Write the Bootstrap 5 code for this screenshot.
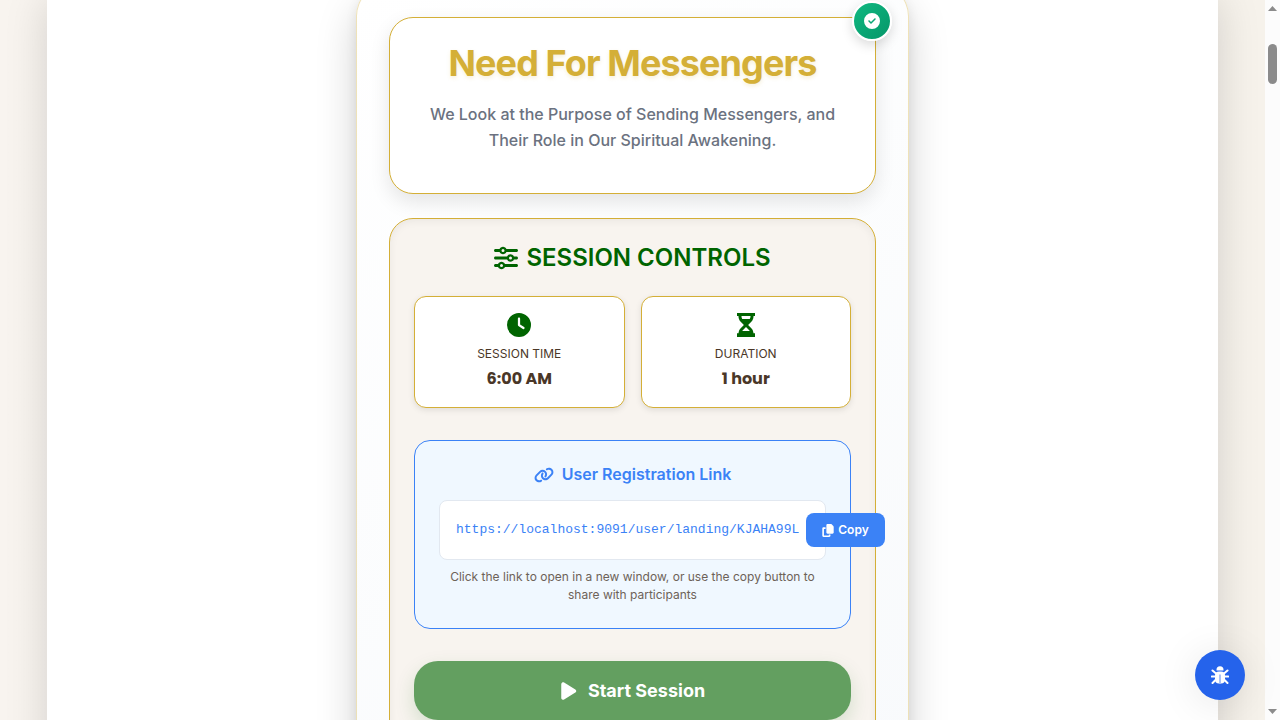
<!DOCTYPE html>
<html lang="en">
<head>
<meta charset="utf-8">
<meta name="viewport" content="width=device-width, initial-scale=1">
<title>Need For Messengers</title>
<link rel="stylesheet" href="https://cdn.jsdelivr.net/npm/bootstrap@5.3.0/dist/css/bootstrap.min.css">
<style>
  :root { --gold: #d4af37; --green: #006400; --blue: #3b82f6; --brown: #4a3728; }
  body { font-family: Inter, "Liberation Sans", sans-serif; background: #f8f4ef; color: var(--brown); }
  svg { fill: currentColor; display: block; flex: none; }
  .viewport { overflow: hidden; }
  .backdrop { background: linear-gradient(90deg, #f8f4ef, #f6f2eb); }
  .sheet { margin: 0 47px; background: #fff; box-shadow: 0 0 40px rgba(0,0,0,.15); }
  .session { max-width: 553px; margin-top: -16px; padding: 32px; border: 1px solid rgba(212,175,55,.35); border-radius: 32px;
    background: linear-gradient(145deg, #fff, #f8fafc); box-shadow: 0 20px 40px rgba(0,0,0,.18), 0 4px 12px rgba(0,0,0,.08); }
  .intro { padding: 24px; border: 1px solid var(--gold); border-radius: 24px; background: #fff; box-shadow: 0 8px 20px rgba(0,0,0,.1); }
  .intro h1 { font-size: 36px; line-height: 43px; font-weight: 700; letter-spacing: -0.025em; color: var(--gold); text-shadow: 0 2px 4px rgba(212,175,55,.2); }
  .intro p { font-size: 16px; line-height: 26px; font-weight: 500; color: #6b7280; }
  .verified { top: -17px; right: -17px; width: 40px; height: 40px; border: 2px solid #fff; background: linear-gradient(135deg, #10b981, #059669); box-shadow: 0 4px 12px rgba(0,0,0,.15); }
  .controls { padding: 24px; border: 1px solid var(--gold); border-radius: 24px; background: #f8f4ef; box-shadow: inset 0 2px 8px rgba(0,0,0,.06); }
  .controls h2 { font-size: 24px; line-height: 29px; font-weight: 600; color: var(--green); }
  .tile { padding: 16px; border: 1px solid var(--gold); border-radius: 12px; background: #fff; box-shadow: 0 2px 6px rgba(0,0,0,.1); }
  .tile svg { color: var(--green); }
  .tile-name { font-size: 12px; line-height: 18px; }
  .tile-value { font-family: Poppins, Inter, sans-serif; font-size: 16px; line-height: 24px; font-weight: 700; }
  .share { margin-bottom: 32px; padding: 24px; border: 1px solid var(--blue); border-radius: 16px; background: #f0f8ff; }
  .share h3 { font-size: 16px; line-height: 19px; font-weight: 600; color: var(--blue); }
  .url-box { height: 60px; padding: 0 16px; gap: 12px; border: 1px solid #e2e8f0; border-radius: 8px; background: #fff; }
  .url-box a { flex: 0 0 338px; min-width: 0; white-space: nowrap; font: 13px/20px Consolas, "Liberation Mono", monospace; color: var(--blue); }
  .btn-copy { flex: none; width: 79px; height: 34px; border-radius: 8px; background: var(--blue); color: #fff; font-size: 12px; font-weight: 600; }
  .hint { font-size: 12px; line-height: 18px; color: #6d6258; }
  .btn-start { height: 59px; border-radius: 24px; background: #639f60; color: #fff; font-size: 18px; font-weight: 700; box-shadow: 0 8px 20px rgba(0,100,0,.15); }
  .btn-start:hover, .btn-copy:hover { background: #2563eb; color: #fff; }
  .btn-bug { right: 35px; bottom: 20px; width: 50px; height: 50px; background: #2563eb; color: #fff; box-shadow: 0 4px 40px rgba(0,0,0,.1); }
  .scroll-track { width: 15px; background: #fcfcfc; color: #8b8b8b; }
  .scroll-thumb { width: 9px; height: 40px; margin-top: 30px; background: #8b8b8b; }
</style>
</head>
<body>
<div class="viewport vh-100 d-flex">
  <div class="backdrop flex-grow-1 overflow-hidden">
    <main class="sheet min-vh-100 d-flex justify-content-center align-items-start">
      <section class="session w-100">
        <header class="intro position-relative text-center mb-4">
          <span class="verified position-absolute rounded-circle d-flex align-items-center justify-content-center text-white">
            <svg width="16" height="16" viewBox="0 0 512 512" aria-hidden="true"><path d="M256 512A256 256 0 1 0 256 0a256 256 0 1 0 0 512zM369 209L241 337c-9.400 9.400-24.600 9.400-33.900 0l-64-64c-9.400-9.400-9.400-24.600 0-33.900s24.600-9.400 33.900 0l47 47L335 175c9.400-9.400 24.600-9.400 33.900 0s9.400 24.600 0 33.900z"/></svg>
          </span>
          <h1 class="mb-3">Need For Messengers</h1>
          <p class="mb-3">We Look at the Purpose of Sending Messengers, and Their Role in Our Spiritual Awakening.</p>
        </header>

        <div class="controls">
          <h2 class="d-flex justify-content-center align-items-center gap-2 mb-4">
            <svg width="24" height="24" viewBox="0 0 512 512" aria-hidden="true"><path d="M0 416c0 17.700 14.300 32 32 32l54.700 0c12.300 28.300 40.500 48 73.300 48s61-19.700 73.300-48L480 448c17.700 0 32-14.300 32-32s-14.300-32-32-32l-246.700 0c-12.300-28.300-40.500-48-73.300-48s-61 19.700-73.300 48L32 384c-17.700 0-32 14.300-32 32zm128 0a32 32 0 1 1 64 0 32 32 0 1 1-64 0zM320 256a32 32 0 1 1 64 0 32 32 0 1 1-64 0zm32-80c-32.800 0-61 19.700-73.300 48L32 224c-17.700 0-32 14.300-32 32s14.300 32 32 32l246.700 0c12.300 28.300 40.500 48 73.300 48s61-19.700 73.300-48l54.700 0c17.700 0 32-14.300 32-32s-14.300-32-32-32l-54.700 0c-12.300-28.300-40.500-48-73.300-48zM192 128a32 32 0 1 1 0-64 32 32 0 1 1 0 64zm73.300-64C253 35.700 224.800 16 192 16s-61 19.700-73.300 48L32 64C14.300 64 0 78.300 0 96s14.300 32 32 32l86.700 0c12.300 28.300 40.500 48 73.300 48s61-19.700 73.300-48L480 128c17.700 0 32-14.300 32-32s-14.300-32-32-32L265.300 64z"/></svg>
            SESSION CONTROLS
          </h2>

          <div class="row row-cols-2 gx-3 mb-4 pb-2">
            <div class="col">
              <div class="tile d-flex flex-column align-items-center">
                <svg class="mb-2" width="24" height="24" viewBox="0 0 512 512" aria-hidden="true"><path d="M256 0a256 256 0 1 1 0 512A256 256 0 1 1 256 0zM232 120l0 136c0 8 4 15.500 10.700 20l96 64c11 7.400 25.900 4.400 33.300-6.700s4.400-25.900-6.700-33.300L280 243.200 280 120c0-13.300-10.700-24-24-24s-24 10.700-24 24z"/></svg>
                <div class="tile-name mb-1">SESSION TIME</div>
                <div class="tile-value">6:00 AM</div>
              </div>
            </div>
            <div class="col">
              <div class="tile d-flex flex-column align-items-center">
                <svg class="mb-2" width="18" height="24" viewBox="0 0 384 512" aria-hidden="true"><path d="M0 0H384V64H352V75c0 42-17 83-47 113L237 256l68 68c29 29 45 67 47 108H384V512H0V432H32c2-41 18-79 47-108L147 256 79 188C49 158 32 117 32 75V64H0zM96 64V75c0 19 6 37 16 53H272c10-16 16-34 16-53V64zM112 384H272c-4-5-8-10-12-15L192 301 124 369c-4 5-8 10-12 15z"/></svg>
                <div class="tile-name mb-1">DURATION</div>
                <div class="tile-value">1 hour</div>
              </div>
            </div>
          </div>

          <div class="share">
            <h3 class="d-flex justify-content-center align-items-center gap-2 mb-3">
              <svg width="20" height="16" viewBox="0 0 640 512" aria-hidden="true"><path d="M579.800 267.700c56.500-56.500 56.500-148 0-204.500c-50-50-128.800-56.500-186.300-15.400l-1.600 1.100c-14.400 10.300-17.700 30.300-7.400 44.600s30.300 17.700 44.600 7.400l1.600-1.100c32.100-22.900 76-19.300 103.800 8.600c31.500 31.500 31.500 82.500 0 114L422.300 334.800c-31.500 31.500-82.500 31.500-114 0c-27.900-27.900-31.500-71.800-8.600-103.800l1.100-1.600c10.300-14.400 6.900-34.400-7.400-44.600s-34.400-6.900-44.600 7.400l-1.100 1.600C206.500 251.200 213 330 263 380c56.500 56.500 148 56.500 204.500 0L579.800 267.700zM60.200 244.300c-56.500 56.500-56.500 148 0 204.500c50 50 128.800 56.500 186.300 15.400l1.600-1.100c14.400-10.300 17.700-30.300 7.400-44.600s-30.300-17.700-44.600-7.400l-1.600 1.100c-32.100 22.900-76 19.300-103.800-8.600C74 372 74 321 105.500 289.500L217.700 177.200c31.500-31.500 82.500-31.500 114 0c27.900 27.900 31.500 71.800 8.600 103.900l-1.100 1.600c-10.300 14.400-6.900 34.400 7.400 44.600s34.400 6.900 44.600-7.400l1.100-1.600C433.500 260.800 427 182 377 132c-56.500-56.500-148-56.500-204.500 0L60.200 244.300z"/></svg>
              User Registration Link
            </h3>
            <div class="url-box d-flex align-items-center mb-2">
              <a class="text-decoration-none" href="#">https://localhost:9091/user/landing/KJAHA99L</a>
              <button type="button" class="btn btn-copy border-0 p-0 d-flex align-items-center justify-content-center gap-1">
                <svg width="12" height="13" viewBox="0 0 448 512" aria-hidden="true"><path d="M208 0L332.100 0c12.700 0 24.900 5.100 33.900 14.100l67.900 67.900c9 9 14.100 21.200 14.100 33.900L448 336c0 26.500-21.500 48-48 48l-192 0c-26.500 0-48-21.500-48-48l0-288c0-26.500 21.500-48 48-48zM48 128l80 0 0 64-64 0 0 256 192 0 0-32 64 0 0 48c0 26.500-21.500 48-48 48L48 512c-26.500 0-48-21.500-48-48L0 176c0-26.500 21.500-48 48-48z"/></svg>
                Copy
              </button>
            </div>
            <p class="hint text-center mb-0">Click the link to open in a new window, or use the copy button to share with participants</p>
          </div>

          <button type="button" class="btn btn-start border-0 w-100 d-flex align-items-center justify-content-center gap-2">
            <svg width="20" height="20" viewBox="0 0 448 512" aria-hidden="true"><path d="M73 39c-14.800-9.100-33.400-9.400-48.500-.9S0 62.600 0 80L0 432c0 17.400 9.400 33.400 24.500 41.900s33.700 8.100 48.500-.9L361 297c14.300-8.700 23-24.200 23-41s-8.700-32.200-23-41L73 39z"/></svg>
            Start Session
          </button>
        </div>
      </section>
    </main>
  </div>

  <div class="scroll-track d-flex flex-column align-items-center flex-shrink-0" aria-hidden="true">
    <svg class="mt-1" width="9" height="10" viewBox="0 0 9 10"><path d="M0 7L4.500 2 9 7z"/></svg>
    <div class="scroll-thumb rounded-pill"></div>
    <svg class="mt-auto mb-1" width="9" height="10" viewBox="0 0 9 10"><path d="M0 3L4.500 8 9 3z"/></svg>
  </div>
</div>

<button type="button" class="btn btn-bug position-fixed rounded-circle border-0 p-0 d-flex align-items-center justify-content-center" aria-label="Report a bug">
  <svg width="18" height="18" viewBox="0 0 18 18" aria-hidden="true"><path d="M5.500 4.500V3.800a3.500 3.500 0 0 1 7 0V4.500z"/><rect x="4" y="5.500" width="10" height="12" rx="4"/><path d="M1.500 4.500L5 7.500M16.500 4.500L13 7.500M.8 10.500H5M17.200 10.500H13M1.500 17L5 13.500M16.500 17L13 13.500" fill="none" stroke="#fff" stroke-width="2" stroke-linecap="round"/><path d="M8 8.500H10V17.500H8z" fill="#a9c1f7"/></svg>
</button>
<script src="https://cdn.jsdelivr.net/npm/bootstrap@5.3.0/dist/js/bootstrap.bundle.min.js"></script>
</body>
</html>
